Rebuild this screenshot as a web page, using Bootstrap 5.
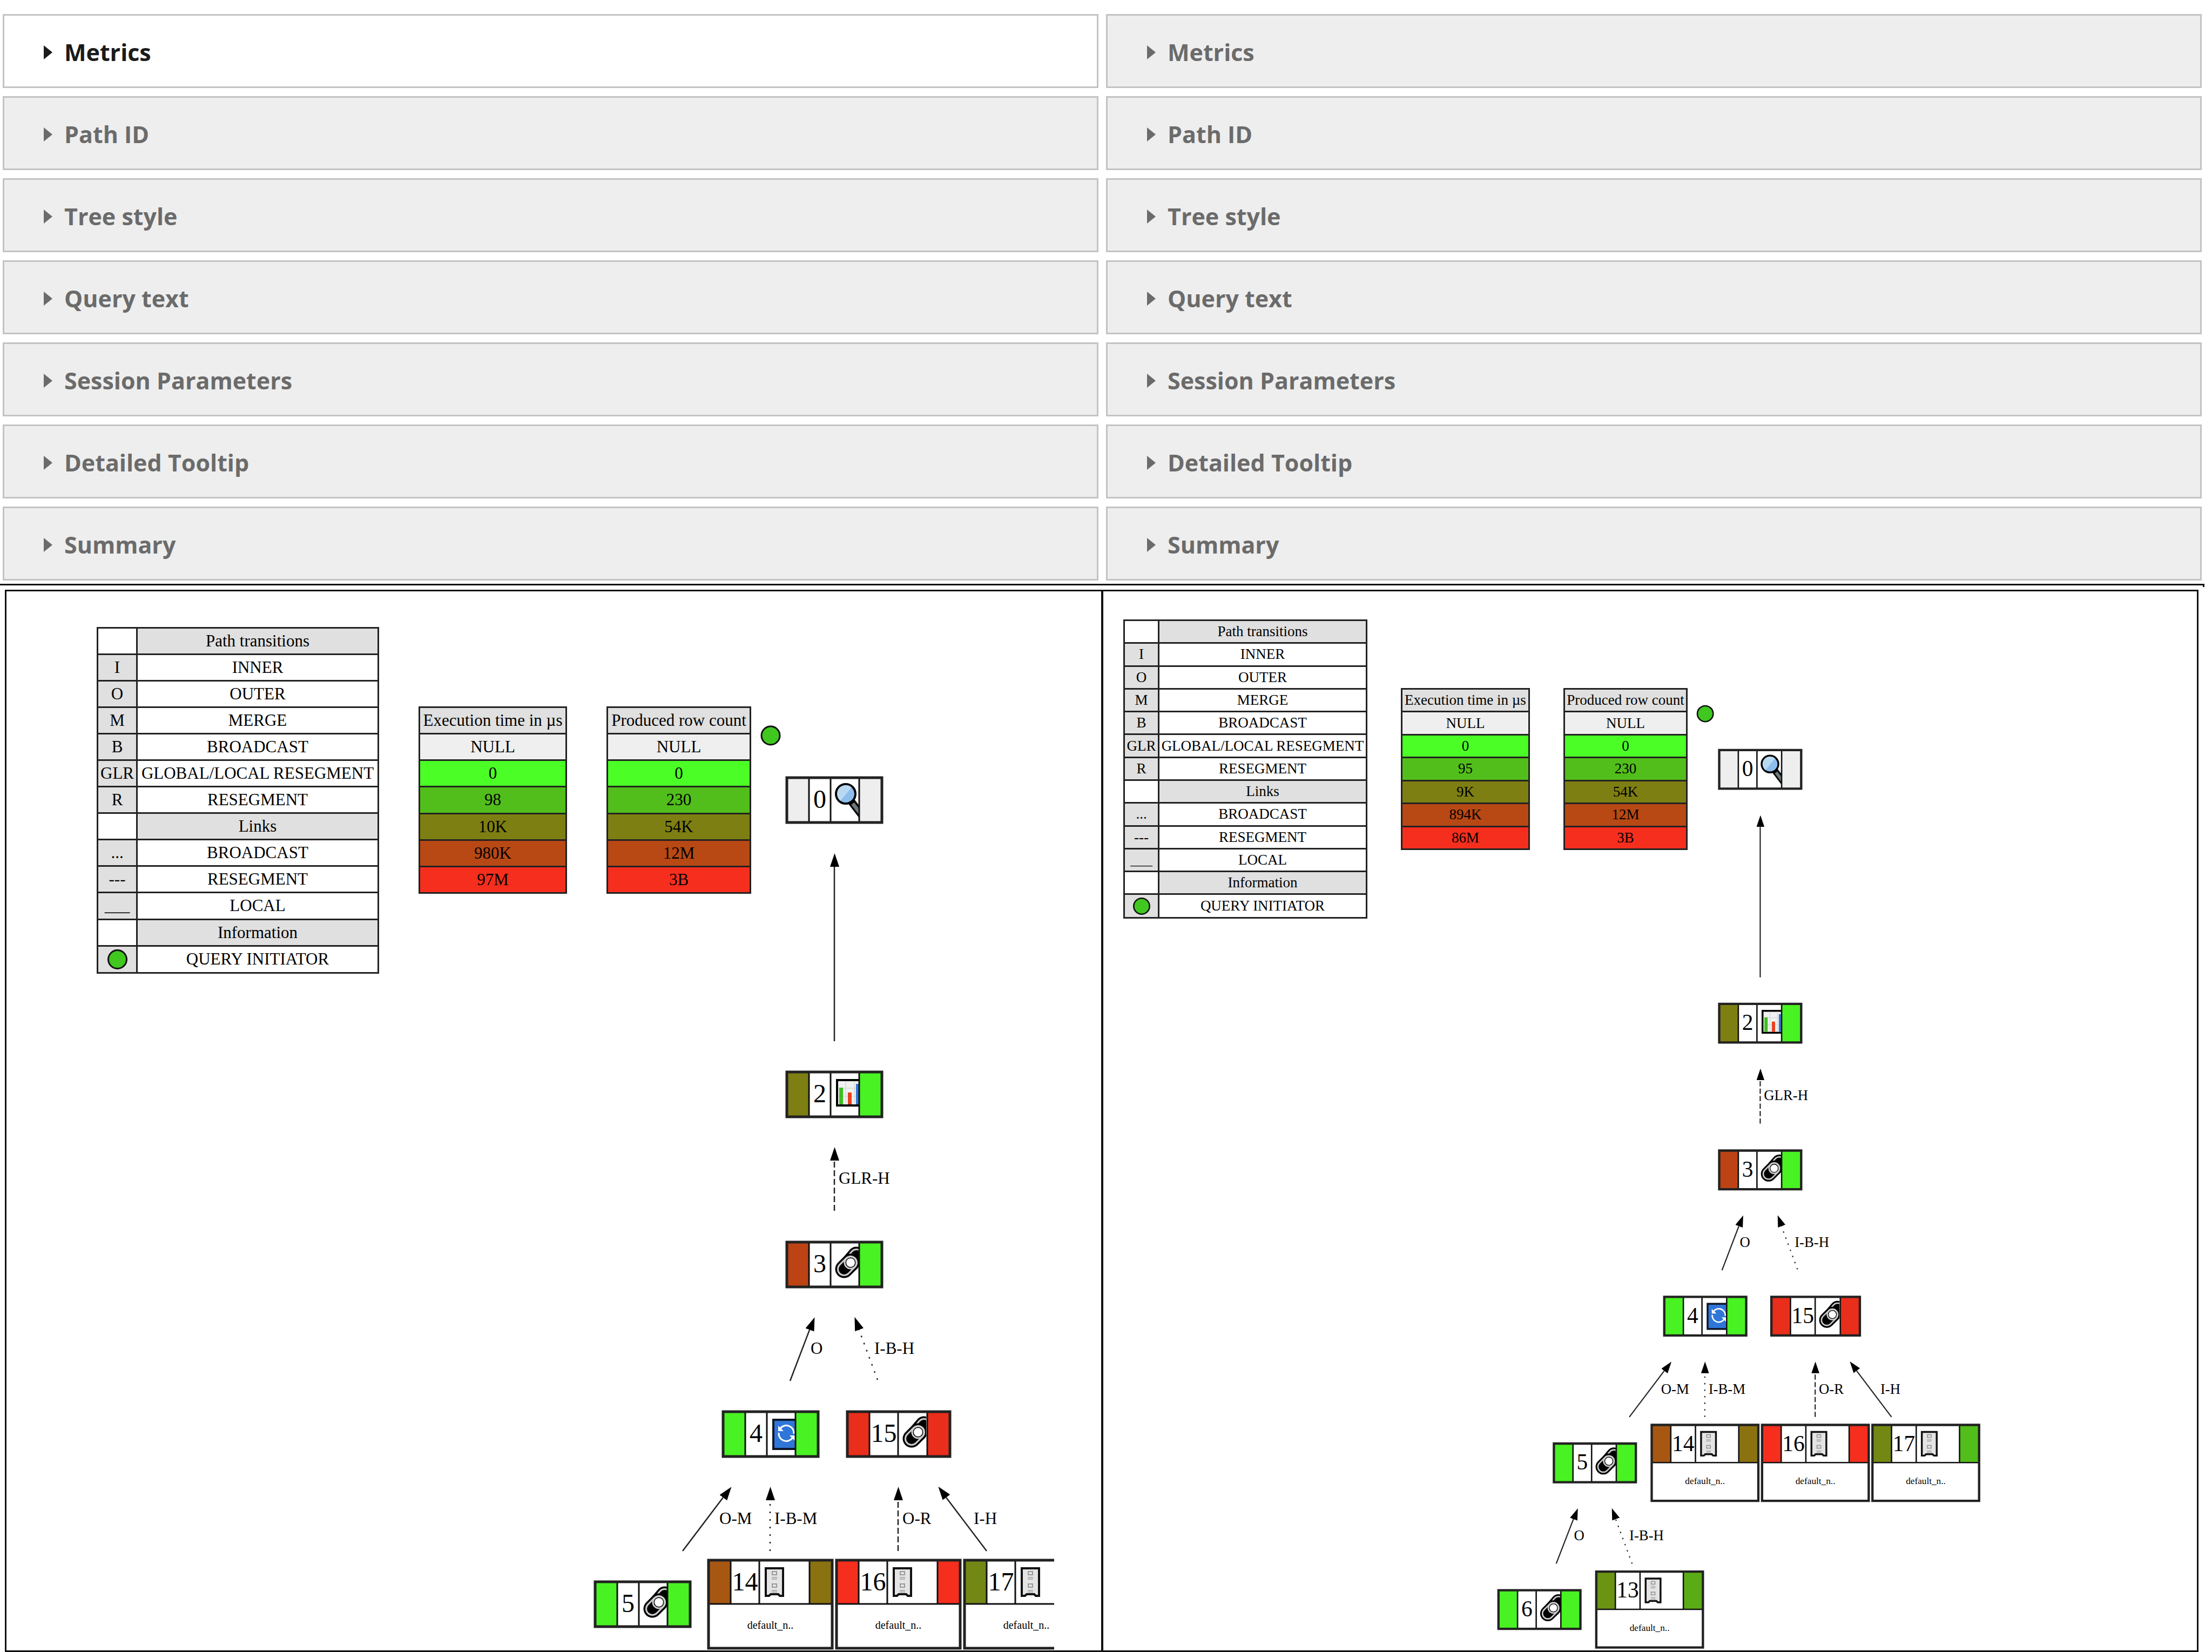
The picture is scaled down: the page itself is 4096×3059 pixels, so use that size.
<!DOCTYPE html>
<html lang="en">
<head>
<meta charset="utf-8">
<meta name="viewport" content="width=device-width, initial-scale=1">
<title>Query plan comparison</title>
<link href="https://cdn.jsdelivr.net/npm/bootstrap@5.3.0/dist/css/bootstrap.min.css" rel="stylesheet">
<style>
  body { background: #fff; color: #000; }
  .page { min-height: 100vh; }
  .options { padding: 26px 19px 6px 5px; gap: 14px; }
  .option-list { gap: 15px; }
  .option-toggle {
    height: 137px; padding: 4px 73px 0; gap: 22px;
    border: 3px solid #c3c3c3; background: #eee; color: #6b6b6b;
    font: 700 43px/60px "Open Sans", "Noto Sans", sans-serif;
  }
  .option-toggle.current { background: #fff; color: #1b1b1b; }
  .option-toggle svg { width: 16px; height: 26px; fill: currentColor; }

  .plans { margin-right: 14px; padding-top: 8px; border-top: 3px solid #111; }
  .plans::after { content: ""; position: absolute; top: 0; right: 0; width: 3px; height: 3px; background: #111; }
  .plan-left { padding-left: 9px; }
  .plan-right { padding-right: 11px; }
  .frame { border: 3px solid #111; overflow: hidden; }
  .plan-left .frame { border-right-width: 2px; }
  .plan-right .frame { border-left-width: 2px; }
  .frame, .frame svg text { font-family: "Liberation Serif", "Times New Roman", serif; }

  .legends { padding: 66px 0 0 167px; gap: 73px; font-size: 31px; line-height: 36px; }
  .plan-right .legends { padding: 52px 0 0 37px; gap: 62px; font-size: 27px; line-height: 31px; }
  .legends table { border-collapse: collapse; table-layout: fixed; text-align: center; white-space: nowrap; }
  .legends th, .legends td { border: 3px solid #222; padding: 0; font-weight: 400; vertical-align: middle; }
  .legends .section-name { background: #e0e0e0; }
  .legends .key-cell { background: #e0e0e0; }
  .legends .key-cell svg { display: block; margin: 0 auto; width: 37px; height: 37px; }
  .plan-right .legends .key-cell svg { width: 32px; height: 32px; }
  .transitions { width: 523px; height: 642px; }
  .transitions col:first-child { width: 73px; }
  .scale { height: 347px; margin-top: 147px; }
  .scale-time { width: 275px; }
  .scale-rows { width: 268px; }
  .plan-right .transitions { width: 452px; height: 554px; }
  .plan-right .transitions col:first-child { width: 64px; }
  .plan-right .scale { height: 300px; margin-top: 127px; }
  .plan-right .scale-time { width: 239px; }
  .plan-right .scale-rows { width: 230px; }
  .lv-null { background: #efefef; }
  .lv-0 { background: #4bff26; }
  .lv-1 { background: #52be1b; }
  .lv-2 { background: #7e7f12; }
  .lv-3 { background: #b84814; }
  .lv-4 { background: #f62e1e; }

  .tree { position: absolute; top: 0; left: 0; width: 100%; height: 100%; }
  .plan-left .tree { width: calc(100% - 87px); }
  .tree .node-no { font-size: 48px; text-anchor: middle; }
  .tree .edge-name { font-size: 31px; }
  .tree .store-name { font-size: 20px; text-anchor: middle; }
</style>
</head>
<body>
<svg width="0" height="0" class="position-absolute" aria-hidden="true">
  <defs>
    <marker id="head" viewBox="0 0 25 17" refX="0" refY="8" markerWidth="25" markerHeight="17" markerUnits="userSpaceOnUse" orient="auto"><path d="M0 0 25 8.500 0 17z"/></marker>
    <g id="ic-search">
      <path d="M29 32 52 62" stroke="#000" stroke-width="14" fill="none"/>
      <path d="M31 35 54 65" stroke="#6d777b" stroke-width="7" fill="none"/>
      <circle cx="18" cy="17" r="18" fill="#8dbdec" stroke="#000" stroke-width="4"/>
      <path d="M3 22A16 16 0 0 1 29 5L8 30A16 16 0 0 1 3 22z" fill="#b9d9f3"/>
    </g>
    <g id="ic-chart">
      <rect x="2" y="2" width="66" height="47" fill="#f1f1f1" stroke="#000" stroke-width="4"/>
      <path d="M4 17H60M4 32H60M18 4V46M34 4V46" stroke="#dedede" stroke-width="2"/>
      <path d="M6 16h7v31H6z" fill="#3cc01f"/>
      <path d="M22 25h7v22h-7z" fill="#e8411f"/>
      <path d="M37 9h8v38h-8z" fill="#2f78dc"/>
    </g>
    <g id="ic-join" fill="none" stroke-linecap="round">
      <path d="M27 25 38 12" stroke="#000" stroke-width="33"/>
      <path d="M27 25 38 12" stroke="#cdcdcd" stroke-width="26"/>
      <path d="M27 25 38 12" stroke="#000" stroke-width="20"/>
      <path d="M15 37 27 25" stroke="#000" stroke-width="33"/>
      <path d="M15 37 27 25" stroke="#cdcdcd" stroke-width="26"/>
      <path d="M15 37 27 25" stroke="#000" stroke-width="20"/>
      <circle cx="27" cy="25" r="11" fill="#000" stroke="#cdcdcd" stroke-width="3"/>
      <circle cx="27" cy="25" r="8" fill="#fff"/>
    </g>
    <g id="ic-merge">
      <rect x="2" y="2" width="66" height="54" fill="#2f76d8" stroke="#0d1626" stroke-width="4"/>
      <g fill="none" stroke="#fff" stroke-width="3">
        <path d="M15 18A14 14 0 0 1 40 28"/>
        <path d="M12 26A14 14 0 0 0 37 36"/>
      </g>
      <path d="M11 13V23H21zM42 41V31H32z" fill="#fff"/>
    </g>
    <g id="ic-store">
      <path d="M2 2H34V53H28L25 50H11L8 53H2z" fill="#e4e4e4" stroke="#111" stroke-width="4"/>
      <g fill="none" stroke="#999" stroke-width="2">
        <path d="M14 8h8v6h-8zM14 31h8v6h-8z"/>
        <path d="M13 19h10M13 22h10M13 43h10M13 46h10" stroke="#b0b0b0"/>
      </g>
    </g>
    <clipPath id="icon-cell"><path d="M0 0H52V80H0z"/></clipPath>
  </defs>
</svg>

<div class="page d-flex flex-column">
  <div class="options d-flex">
    <section class="option-list d-flex flex-column flex-fill" data-options="left" aria-label="First plan options"></section>
    <section class="option-list d-flex flex-column flex-fill" data-options="right" aria-label="Second plan options"></section>
  </div>

  <main class="plans d-flex flex-fill position-relative">
    <section class="plan-left w-50 d-flex">
      <div class="frame flex-fill position-relative">
        <div class="legends d-flex align-items-start" data-times="98 10K 980K 97M"></div>
        <svg class="tree" data-tree="left" role="img" aria-label="First query plan"></svg>
      </div>
    </section>
    <section class="plan-right w-50 d-flex">
      <div class="frame flex-fill position-relative">
        <div class="legends d-flex align-items-start" data-times="95 9K 894K 86M"></div>
        <svg class="tree" data-tree="right" role="img" aria-label="Second query plan"></svg>
      </div>
    </section>
  </main>
</div>

<script src="https://cdn.jsdelivr.net/npm/bootstrap@5.3.0/dist/js/bootstrap.bundle.min.js"></script>
<script>
  // Collapsed option panels above each plan
  const options = ['Metrics', 'Path ID', 'Tree style', 'Query text', 'Session Parameters', 'Detailed Tooltip', 'Summary'];
  document.querySelectorAll('[data-options]').forEach(list => {
    list.innerHTML = options.map((name, i) =>
      `<button type="button" aria-expanded="false" class="option-toggle d-flex align-items-center w-100 text-start${list.dataset.options === 'left' && i === 0 ? ' current' : ''}">` +
      `<svg viewBox="0 0 16 26" aria-hidden="true"><path d="M0 0 16 13 0 26z"/></svg><span>${name}</span></button>`).join('');
  });

  // Legends
  const dot = '<svg viewBox="0 0 37 37" aria-label="green dot"><circle cx="18.500" cy="18.500" r="17" fill="#40c720" stroke="#111" stroke-width="3"/></svg>';
  const transitions = [['I', 'INNER'], ['O', 'OUTER'], ['M', 'MERGE'], ['B', 'BROADCAST'], ['GLR', 'GLOBAL/LOCAL RESEGMENT'], ['R', 'RESEGMENT'],
    ['', 'Links'], ['...', 'BROADCAST'], ['---', 'RESEGMENT'], ['___', 'LOCAL'], ['', 'Information'], [dot, 'QUERY INITIATOR']];
  const scaleTable = (cls, title, values) =>
    `<table class="scale ${cls}"><tbody><tr><th scope="col" class="section-name">${title}</th></tr>` +
    `<tr><td class="lv-null">NULL</td></tr>` +
    ['0', ...values].map((v, i) => `<tr><td class="lv-${i}">${v}</td></tr>`).join('') + '</tbody></table>';
  document.querySelectorAll('.legends').forEach(box => {
    box.innerHTML =
      '<table class="transitions"><colgroup><col><col></colgroup><tbody><tr><td></td><th scope="col" class="section-name">Path transitions</th></tr>' +
      transitions.map(([k, v]) => k
        ? `<tr><td class="key-cell">${k}</td><td>${v}</td></tr>`
        : `<tr><td></td><th scope="col" class="section-name">${v}</th></tr>`).join('') + '</tbody></table>' +
      scaleTable('scale-time', 'Execution time in µs', box.dataset.times.split(' ')) +
      scaleTable('scale-rows', 'Produced row count', ['230', '54K', '12M', '3B']);
  });

  // Plan trees: [number, left, top, icon, left colour, right colour]
  const nodes = [
    [0, 1457, 1440, 'search', '#eee', '#eee'],
    [2, 1457, 1985, 'chart', '#7e7f12', '#49f222'],
    [3, 1457, 2300, 'join', '#bd4315', '#49f222'],
    [4, 1339, 2614, 'merge', '#49f222', '#49f222'],
    [15, 1569, 2614, 'join', '#e92e1b', '#e92e1b'],
    [5, 1102, 2929, 'join', '#49f222', '#49f222'],
    [14, 1312, 2889, 'store', '#a75712', '#8b7211'],
    [16, 1549, 2889, 'store', '#f62e1e', '#f62e1e'],
    [17, 1786, 2889, 'store', '#738714', '#52be1b'],
    [6, 983, 3244, 'join', '#49f222', '#49f222'],
    [13, 1193, 3204, 'store', '#6b9413', '#5aac16']
  ];
  // [from x, from y, tip x, tip y, line style, label, label x, label baseline]
  const edges = [
    [1545, 1928, 1545, 1580, 'local'],
    [1545, 2242, 1545, 2124, 'reseg', 'GLR-H', 1553, 2192],
    [1463, 2557, 1508, 2439, 'local', 'O', 1501, 2507],
    [1625, 2555, 1582, 2439, 'bcast', 'I-B-H', 1619, 2507],
    [1264, 2872, 1354, 2753, 'local', 'O-M', 1332, 2822],
    [1426, 2872, 1426, 2753, 'bcast', 'I-B-M', 1434, 2822],
    [1663, 2872, 1663, 2753, 'reseg', 'O-R', 1671, 2822],
    [1827, 2872, 1737, 2753, 'local', 'I-H', 1803, 2822],
    [1107, 3187, 1153, 3068, 'local', 'O', 1145, 3137],
    [1270, 3187, 1226, 3068, 'bcast', 'I-B-H', 1264, 3137]
  ];
  const dashes = { local: '', reseg: 'stroke-dasharray="11 5"', bcast: 'stroke-dasharray="3 11"' };

  const drawNode = ([no, x, y, icon, left, right]) => {
    const store = icon === 'store', wide = no > 9;
    const w = store ? 229 : wide ? 190 : 176, h = store ? 81 : 83;
    const c1 = 41, c2 = wide ? 94 : 81, c3 = w - 42;
    return `<g transform="translate(${x} ${y})"><path d="M0 0H${w}V${store ? 163 : h}H0z" fill="#fff"/>` +
      `<path d="M0 0H${c1}V${h}H0z" fill="${left}"/>` +
      `<g transform="translate(${c2} 0)" clip-path="url(#icon-cell)"><use href="#ic-${icon}" x="10" y="13"/></g>` +
      `<path d="M${c3} 0H${w}V${h}H${c3}z" fill="${right}"/>` +
      `<path d="M${c1} 0V${h}M${c2} 0V${h}M${c3} 0V${h}${store ? `M0 ${h}H${w}` : ''}" stroke="#111" stroke-width="3"/>` +
      `<path d="M0 0H${w}V${store ? 163 : h}H0z" fill="none" stroke="#222" stroke-width="5"/>` +
      `<text class="node-no" x="${(c1 + c2) / 2}" y="56">${no}</text>` +
      (store ? `<text class="store-name" x="${w / 2}" y="127">default_n..</text>` : '') + '</g>';
  };
  const drawEdge = ([x1, y1, x2, y2, style, label, lx, ly]) => {
    // stop the line one arrowhead short of the tip
    const len = Math.hypot(x2 - x1, y2 - y1), t = (len - 25) / len;
    return `<path d="M${x1} ${y1}L${x1 + (x2 - x1) * t} ${y1 + (y2 - y1) * t}" fill="none" stroke="#222" stroke-width="2.500" ${dashes[style]} marker-end="url(#head)"/>` +
      (label ? `<text class="edge-name" x="${lx}" y="${ly}">${label}</text>` : '');
  };
  // pan and zoom of each view
  const views = { left: 'translate(-12 -1095)', right: 'translate(-116 -948) scale(.8624)' };
  document.querySelectorAll('[data-tree]').forEach(svg => {
    const side = svg.dataset.tree;
    const deep = side === 'right';
    svg.innerHTML = `<g transform="${views[side]}">` +
      '<circle cx="1427" cy="1362" r="17" fill="#40c720" stroke="#111" stroke-width="3"/>' +
      edges.slice(0, deep ? 10 : 8).map(drawEdge).join('') +
      nodes.slice(0, deep ? 11 : 9).map(drawNode).join('') + '</g>';
  });
</script>
</body>
</html>
